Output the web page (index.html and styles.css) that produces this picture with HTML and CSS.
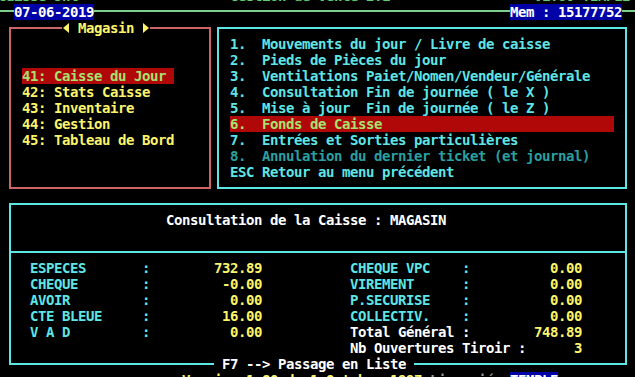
FILE: index.html
```html
<!DOCTYPE html>
<html lang="fr">
<head>
    <meta charset="UTF-8">
    <meta name="viewport" content="width=device-width, initial-scale=1.0">
    <title>Consultation de la Caisse</title>
    <link rel="stylesheet" href="styles.css">
</head>
<body>
    <div class="screen">
        <!-- Top lines -->
        <div class="top-cut">Caisse Jnl                   Gestion de Vente 2.1                  V1.80 TEMPLE</div>
        <div class="status">
            <span class="chip">07-06-2019</span>
            <span class="chip">Mem : 15177752</span>
        </div>

        <!-- Frames -->
        <div class="box box-shop"></div>
        <div class="box box-main"></div>
        <div class="box box-cash"></div>
        <div class="divider"></div>

        <!-- Shop menu -->
        <div class="box-title">
            <span class="arrow arrow-left"></span>
            <span class="box-name"> Magasin </span>
            <span class="arrow arrow-right"></span>
        </div>
        <div class="shop-menu">
            <div class="selected">41: Caisse du Jour </div>
            <div>42: Stats Caisse</div>
            <div>43: Inventaire</div>
            <div>44: Gestion</div>
            <div>45: Tableau de Bord</div>
        </div>

        <!-- Main menu -->
        <div class="main-menu">
            <div>1.  Mouvements du jour / Livre de caisse</div>
            <div>2.  Pieds de Pièces du jour</div>
            <div>3.  Ventilations Paiet/Nomen/Vendeur/Générale</div>
            <div>4.  Consultation Fin de journée ( le X )</div>
            <div>5.  Mise à jour  Fin de journée ( le Z )</div>
            <div class="selected">6.  Fonds de Caisse</div>
            <div>7.  Entrées et Sorties particulières</div>
            <div class="disabled">8.  Annulation du dernier ticket (et journal)</div>
            <div>ESC Retour au menu précédent</div>
        </div>

        <!-- Cash register -->
        <div class="cash-title">Consultation de la Caisse : MAGASIN</div>
        <div class="totals-left">
            <div class="field"><span>ESPECES</span><span>:</span><span class="value">732.89</span></div>
            <div class="field"><span>CHEQUE</span><span>:</span><span class="value">-0.00</span></div>
            <div class="field"><span>AVOIR</span><span>:</span><span class="value">0.00</span></div>
            <div class="field"><span>CTE BLEUE</span><span>:</span><span class="value">16.00</span></div>
            <div class="field"><span>V A D</span><span>:</span><span class="value">0.00</span></div>
        </div>
        <div class="totals-right">
            <div class="field"><span>CHEQUE VPC</span><span>:</span><span class="value">0.00</span></div>
            <div class="field"><span>VIREMENT</span><span>:</span><span class="value">0.00</span></div>
            <div class="field"><span>P.SECURISE</span><span>:</span><span class="value">0.00</span></div>
            <div class="field"><span>COLLECTIV.</span><span>:</span><span class="value">0.00</span></div>
            <div class="field field-white"><span>Total Général</span><span>:</span><span class="value">748.89</span></div>
            <div class="field field-white field-wide"><span>Nb Ouvertures Tiroir :</span><span class="value">3</span></div>
        </div>
        <div class="box-footer"> F7 --> Passage en Liste </div>

        <!-- Bottom line -->
        <div class="version">Version 1.80 du 1 Octobre 1997 <span class="muted">Licencié :</span><span class="chip">TEMPLE</span></div>
    </div>
</body>
</html>
```

FILE: styles.css
```css
/* General Styles */
html, body {
    height: 100%;
    margin: 0;
    padding: 0;
    background-color: #000;
    overflow: hidden;
}

/* 80x25 text screen, 8x16 cells */
.screen {
    width: 640px;
    height: 400px;
    margin: -12px 0 0 -2px;
    display: grid;
    grid-template-columns: repeat(80, 8px);
    grid-template-rows: repeat(25, 16px);
    font-family: "DejaVu Sans Mono", "Liberation Mono", monospace;
    font-weight: bold;
    font-size: 14px;
    line-height: 16px;
    letter-spacing: -0.43px;
    color: #5ee6e6;
}
.top-cut,
.box-name,
.box-footer,
.cash-title,
.version,
.shop-menu div,
.main-menu div,
.field span {
    white-space: pre;
    height: 16px;
}

/* Top lines */
.top-cut {
    grid-row: 1;
    grid-column: 1 / -1;
    color: #5fcf6f;
}
.status {
    grid-row: 2;
    grid-column: 1 / -1;
    display: flex;
    justify-content: space-between;
    padding: 0 16px;
    background: linear-gradient(#7ccf8c, #7ccf8c) no-repeat 0 6px / 100% 2px;
}
.chip {
    background-color: #0000a8;
    color: #fff;
    white-space: pre;
}

/* Frames */
.box {
    border: 2px solid #5ee6e6;
    margin: 7px 3px;
}
.box-shop {
    grid-row: 3 / 14;
    grid-column: 2 / 28;
    border-color: #cc6666;
}
.box-main {
    grid-row: 3 / 14;
    grid-column: 28 / 80;
}
.box-cash {
    grid-row: 14 / 25;
    grid-column: 2 / 80;
}
.divider {
    grid-row: 17;
    grid-column: 2 / 80;
    margin: 7px 3px 0;
    border-top: 2px solid #5ee6e6;
}

/* Menus */
.box-title {
    grid-row: 3;
    grid-column: 9 / 20;
    display: flex;
    align-items: center;
    background-color: #000;
    color: #fbf46a;
}
.arrow {
    display: flex;
    justify-content: center;
    width: 8px;
    height: 16px;
    align-items: center;
}
.arrow::before {
    content: "";
    border-top: 5px solid transparent;
    border-bottom: 5px solid transparent;
}
.arrow-left::before {
    border-right: 6px solid #fbf46a;
}
.arrow-right::before {
    border-left: 6px solid #fbf46a;
}
.box-name {
    width: 72px;
}
.shop-menu {
    grid-row: 6 / 11;
    grid-column: 4 / 23;
    color: #fbf46a;
}
.main-menu {
    grid-row: 4 / 13;
    grid-column: 30 / 78;
}
.selected {
    background-color: #b00808;
    color: #a6e26e;
}
.disabled {
    color: #2aa0a0;
}

/* Cash register */
.cash-title {
    grid-row: 15;
    grid-column: 22 / 57;
    color: #fff;
}
.totals-left {
    grid-row: 18 / 23;
    grid-column: 5 / 34;
}
.totals-right {
    grid-row: 18 / 24;
    grid-column: 45 / 74;
}
.field {
    display: grid;
    grid-template-columns: 112px 8px 112px;
}
.field .value {
    color: #fbf46a;
    text-align: right;
}
.field-white {
    color: #fff;
}
.field-wide {
    grid-template-columns: 176px 56px;
}
.box-footer {
    grid-row: 24;
    grid-column: 28 / 53;
    background-color: #000;
    color: #fff;
}

/* Bottom line */
.version {
    grid-row: 25;
    grid-column: 24 / -1;
    color: #fbf46a;
}
.muted {
    color: #9a9a9a;
}
```
